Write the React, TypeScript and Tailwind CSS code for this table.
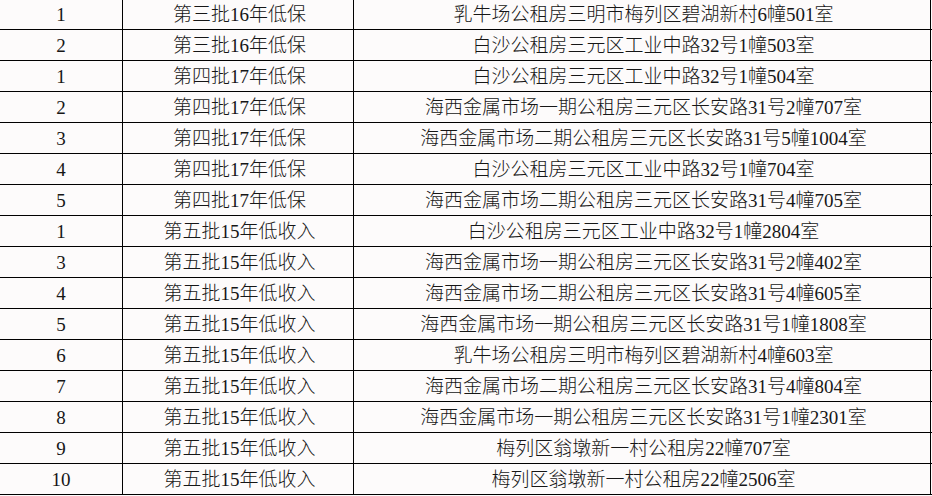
import React from 'react';

type Row = [string, string, string];

const rows: Row[] = [
  ['1', '第三批16年低保', '乳牛场公租房三明市梅列区碧湖新村6幢501室'],
  ['2', '第三批16年低保', '白沙公租房三元区工业中路32号1幢503室'],
  ['1', '第四批17年低保', '白沙公租房三元区工业中路32号1幢504室'],
  ['2', '第四批17年低保', '海西金属市场一期公租房三元区长安路31号2幢707室'],
  ['3', '第四批17年低保', '海西金属市场二期公租房三元区长安路31号5幢1004室'],
  ['4', '第四批17年低保', '白沙公租房三元区工业中路32号1幢704室'],
  ['5', '第四批17年低保', '海西金属市场二期公租房三元区长安路31号4幢705室'],
  ['1', '第五批15年低收入', '白沙公租房三元区工业中路32号1幢2804室'],
  ['3', '第五批15年低收入', '海西金属市场一期公租房三元区长安路31号2幢402室'],
  ['4', '第五批15年低收入', '海西金属市场二期公租房三元区长安路31号4幢605室'],
  ['5', '第五批15年低收入', '海西金属市场一期公租房三元区长安路31号1幢1808室'],
  ['6', '第五批15年低收入', '乳牛场公租房三明市梅列区碧湖新村4幢603室'],
  ['7', '第五批15年低收入', '海西金属市场二期公租房三元区长安路31号4幢804室'],
  ['8', '第五批15年低收入', '海西金属市场一期公租房三元区长安路31号1幢2301室'],
  ['9', '第五批15年低收入', '梅列区翁墩新一村公租房22幢707室'],
  ['10', '第五批15年低收入', '梅列区翁墩新一村公租房22幢2506室'],
];

export default function App() {
  return (
    <div
      className="w-[932px] h-[496px] overflow-hidden bg-[#fdfbfb] text-[#161616]"
      style={{ fontFamily: '"Liberation Serif", "Noto Sans CJK SC", serif' }}
    >
      <div className="-mt-[1px]">
        {rows.map(([no, batch, address], i) => (
          <div key={i} className="grid grid-cols-[123px_231px_577px] h-[31px] border-b border-black text-[19px] leading-none font-light">
            <div className="flex items-center justify-center border-r border-black">{no}</div>
            <div className="flex items-center justify-center border-r border-black pl-[3px]">{batch}</div>
            <div className="flex items-center justify-center border-r border-black pl-[3px]">{address}</div>
          </div>
        ))}
      </div>
    </div>
  );
}
